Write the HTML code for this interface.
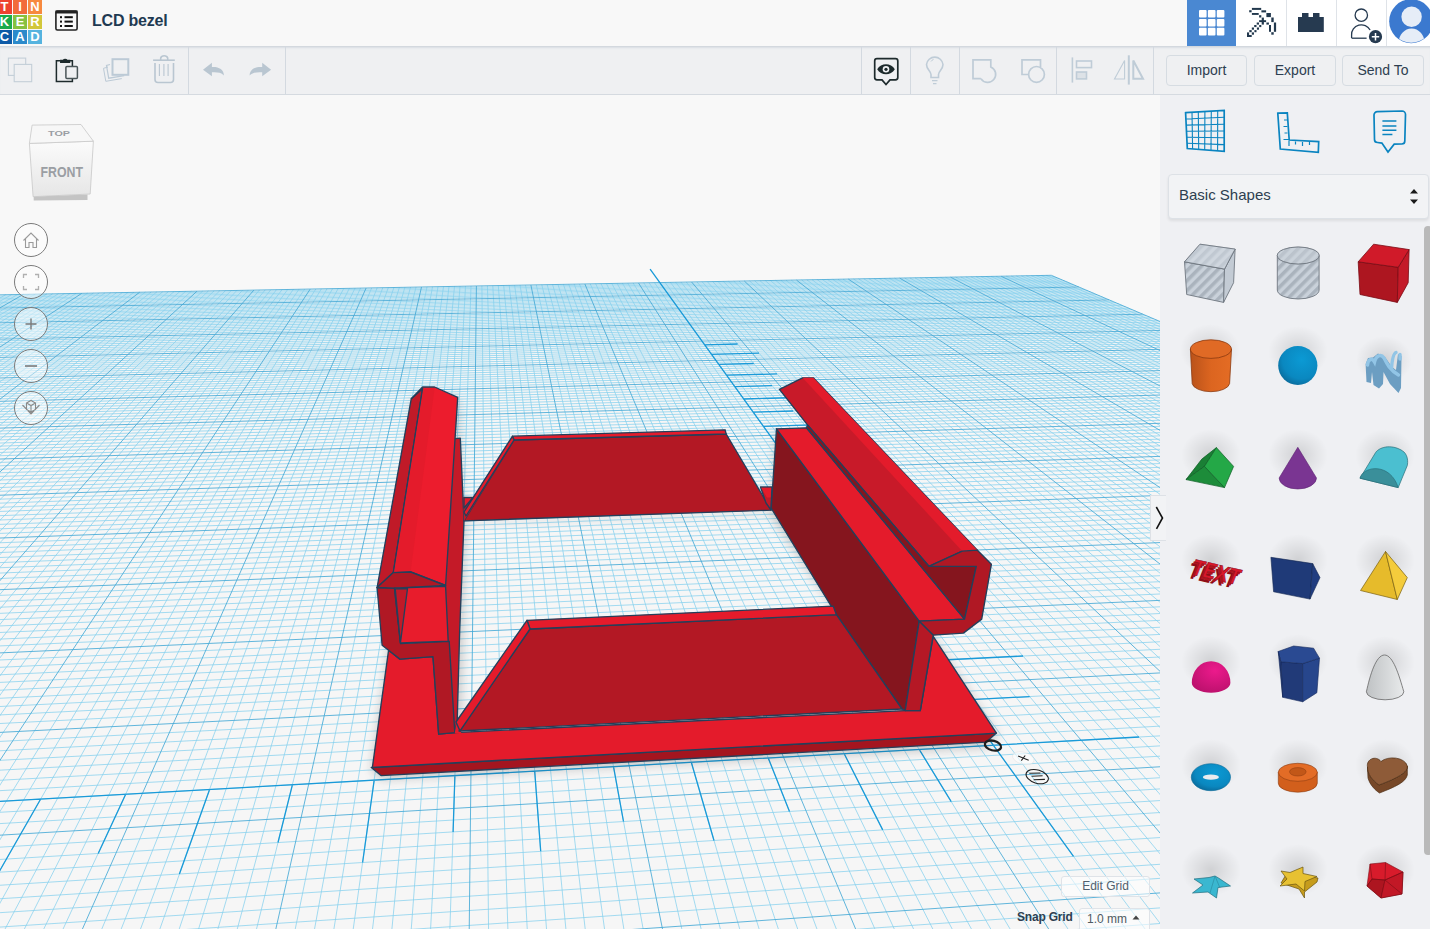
<!DOCTYPE html>
<html><head><meta charset="utf-8"><title>LCD bezel | Tinkercad</title>
<style>
*{box-sizing:border-box}
html,body{margin:0;padding:0;width:1430px;height:929px;overflow:hidden;background:#f8f8f8;font-family:"Liberation Sans",sans-serif}
.abs{position:absolute}
#view{position:absolute;left:0;top:95px;width:1160px;height:834px;overflow:hidden;background:#f8f8f8}
#header{position:absolute;left:0;top:0;width:1430px;height:47px;background:#f8f8f8;border-bottom:1px solid #d3d8de}
#hright{position:absolute;left:1236px;top:0;width:194px;height:46px;background:#fff}
#toolbar{position:absolute;left:0;top:47px;width:1430px;height:48px;background:#eff0f2;border-bottom:1px solid #d5dae0;box-shadow:inset 0 2px 2px -1px #d8dde3}
#panel{position:absolute;left:1160px;top:95px;width:270px;height:834px;background:#eff0f3;overflow:hidden}
.sep{position:absolute;width:1px;background:#d3d9e0}
.title{position:absolute;left:92px;top:12px;font-size:16px;font-weight:bold;color:#1f3a52;letter-spacing:-0.2px}
.btn{position:absolute;top:8px;height:31px;border:1px solid #d6dce2;border-radius:4px;font-size:14px;color:#2d3e50;text-align:center;line-height:29px;background:#eff0f2}
.logo div{position:absolute;width:14px;height:14px;color:#fff;font-weight:bold;font-size:13px;line-height:14px;text-align:center}
.ctl{position:absolute;left:14px;width:34px;height:34px;border-radius:50%;border:1px solid #7b7b7b;background:rgba(255,255,255,0.45)}
</style></head><body>
<div id="view">
<svg width="1160" height="834" viewBox="0 95 1160 834" style="position:absolute;left:0;top:0">
<polygon points="-35.4,295.5 1051.3,275.3 2468.9,877.7 -1812.3,1204.1" fill="#f6f6f6"/>
<path d="M-29.5 295.4L-1782.5 1201.8M-23.6 295.3L-1752.9 1199.6M-17.7 295.1L-1723.4 1197.3M-11.8 295.0L-1694.0 1195.1M-5.9 294.9L-1664.7 1192.9M-0.0 294.8L-1635.5 1190.6M5.8 294.7L-1606.4 1188.4M11.7 294.6L-1577.4 1186.2M17.6 294.5L-1548.6 1184.0M29.3 294.3L-1491.2 1179.6M35.2 294.2L-1462.7 1177.5M41.0 294.1L-1434.3 1175.3M46.9 293.9L-1406.0 1173.1M52.7 293.8L-1377.8 1171.0M58.5 293.7L-1349.7 1168.8M64.4 293.6L-1321.8 1166.7M70.2 293.5L-1293.9 1164.6M76.0 293.4L-1266.1 1162.5M87.6 293.2L-1210.9 1158.3M93.4 293.1L-1183.5 1156.2M99.2 293.0L-1156.1 1154.1M105.0 292.9L-1128.9 1152.0M110.8 292.8L-1101.7 1149.9M116.6 292.7L-1074.7 1147.9M122.4 292.5L-1047.8 1145.8M128.1 292.4L-1020.9 1143.8M133.9 292.3L-994.2 1141.7M145.4 292.1L-941.0 1137.7M151.2 292.0L-914.5 1135.7M156.9 291.9L-888.2 1133.7M162.7 291.8L-861.9 1131.7M168.4 291.7L-835.8 1129.7M174.1 291.6L-809.7 1127.7M179.9 291.5L-783.8 1125.7M185.6 291.4L-757.9 1123.7M191.3 291.3L-732.1 1121.8M202.7 291.1L-680.9 1117.9M208.4 291.0L-655.4 1115.9M214.1 290.8L-630.0 1114.0M219.8 290.7L-604.7 1112.0M225.5 290.6L-579.5 1110.1M231.2 290.5L-554.3 1108.2M236.9 290.4L-529.3 1106.3M242.5 290.3L-504.4 1104.4M248.2 290.2L-479.5 1102.5M259.5 290.0L-430.1 1098.7M265.2 289.9L-405.5 1096.9M270.8 289.8L-381.0 1095.0M276.5 289.7L-356.5 1093.1M282.1 289.6L-332.2 1091.3M287.7 289.5L-308.0 1089.4M293.4 289.4L-283.8 1087.6M299.0 289.3L-259.7 1085.7M304.6 289.2L-235.8 1083.9M315.8 289.0L-188.0 1080.3M321.4 288.9L-164.3 1078.5M327.0 288.8L-140.7 1076.7M332.6 288.7L-117.1 1074.9M338.2 288.5L-93.6 1073.1M343.8 288.4L-70.2 1071.3M349.4 288.3L-46.9 1069.5M355.0 288.2L-23.6 1067.7M360.5 288.1L-0.5 1066.0M371.7 287.9L45.6 1062.5M377.2 287.8L68.6 1060.7M382.8 287.7L91.4 1059.0M388.3 287.6L114.2 1057.2M393.9 287.5L136.9 1055.5M399.4 287.4L159.5 1053.8M404.9 287.3L182.0 1052.1M410.5 287.2L204.5 1050.4M416.0 287.1L226.8 1048.6M427.0 286.9L271.4 1045.3M432.5 286.8L293.5 1043.6M438.0 286.7L315.6 1041.9M443.5 286.6L337.6 1040.2M449.0 286.5L359.5 1038.5M454.5 286.4L381.4 1036.9M460.0 286.3L403.2 1035.2M465.5 286.2L424.9 1033.5M471.0 286.1L446.5 1031.9M481.9 285.9L489.6 1028.6M487.4 285.8L511.0 1027.0M492.8 285.7L532.4 1025.4M498.3 285.6L553.6 1023.7M503.7 285.5L574.9 1022.1M509.2 285.4L596.0 1020.5M514.6 285.3L617.1 1018.9M520.1 285.2L638.1 1017.3M525.5 285.1L659.0 1015.7M536.3 284.9L700.7 1012.5M541.8 284.8L721.4 1010.9M547.2 284.7L742.0 1009.4M552.6 284.6L762.6 1007.8M558.0 284.5L783.2 1006.2M563.4 284.4L803.6 1004.7M568.8 284.3L824.0 1003.1M574.2 284.2L844.3 1001.6M579.5 284.1L864.6 1000.0M590.3 283.9L904.9 997.0M595.7 283.8L925.0 995.4M601.0 283.7L945.0 993.9M606.4 283.6L964.9 992.4M611.8 283.5L984.8 990.9M617.1 283.4L1004.6 989.4M622.5 283.3L1024.3 987.8M627.8 283.2L1044.0 986.3M633.2 283.1L1063.6 984.9M643.8 282.9L1102.7 981.9M649.1 282.8L1122.1 980.4M654.5 282.7L1141.5 978.9M659.8 282.6L1160.8 977.4M665.1 282.5L1180.0 976.0M670.4 282.4L1199.2 974.5M675.7 282.3L1218.3 973.1M681.0 282.2L1237.4 971.6M686.3 282.1L1256.4 970.2M696.9 281.9L1294.3 967.3M702.2 281.8L1313.1 965.8M707.4 281.7L1331.9 964.4M712.7 281.6L1350.6 963.0M718.0 281.5L1369.2 961.6M723.3 281.4L1387.8 960.1M728.5 281.3L1406.4 958.7M733.8 281.2L1424.8 957.3M739.0 281.1L1443.3 955.9M749.5 280.9L1479.9 953.1M754.7 280.8L1498.2 951.7M760.0 280.7L1516.4 950.3M765.2 280.6L1534.5 948.9M770.4 280.5L1552.6 947.6M775.7 280.4L1570.7 946.2M780.9 280.3L1588.6 944.8M786.1 280.3L1606.6 943.5M791.3 280.2L1624.4 942.1M801.7 280.0L1660.0 939.4M806.9 279.9L1677.7 938.0M812.1 279.8L1695.4 936.7M817.3 279.7L1713.0 935.3M822.5 279.6L1730.5 934.0M827.6 279.5L1748.0 932.7M832.8 279.4L1765.4 931.3M838.0 279.3L1782.8 930.0M843.1 279.2L1800.2 928.7M853.5 279.0L1834.7 926.1M858.6 278.9L1851.9 924.8M863.8 278.8L1869.0 923.4M868.9 278.7L1886.1 922.1M874.0 278.6L1903.1 920.8M879.2 278.5L1920.1 919.6M884.3 278.4L1937.0 918.3M889.4 278.3L1953.9 917.0M894.6 278.2L1970.7 915.7M904.8 278.1L2004.2 913.1M909.9 278.0L2020.9 911.9M915.0 277.9L2037.5 910.6M920.1 277.8L2054.1 909.3M925.2 277.7L2070.7 908.1M930.3 277.6L2087.1 906.8M935.4 277.5L2103.6 905.6M940.5 277.4L2120.0 904.3M945.6 277.3L2136.3 903.1M955.7 277.1L2168.9 900.6M960.8 277.0L2185.1 899.4M965.8 276.9L2201.2 898.1M970.9 276.8L2217.3 896.9M976.0 276.7L2233.4 895.7M981.0 276.6L2249.4 894.4M986.1 276.5L2265.4 893.2M991.1 276.5L2281.3 892.0M996.1 276.4L2297.2 890.8M1006.2 276.2L2328.8 888.4M1011.2 276.1L2344.5 887.2M1016.3 276.0L2360.2 886.0M1021.3 275.9L2375.9 884.8M1026.3 275.8L2391.5 883.6M1031.3 275.7L2407.0 882.4M1036.3 275.6L2422.6 881.2M1041.3 275.5L2438.0 880.1M1046.3 275.4L2453.5 878.9M-1853.2 1225.0L2494.2 888.5M-1801.6 1198.6L2462.2 874.9M-1752.2 1173.4L2431.1 861.7M-1704.9 1149.2L2401.0 848.9M-1659.5 1126.0L2371.8 836.5M-1616.0 1103.7L2343.5 824.4M-1534.1 1061.9L2289.3 801.4M-1495.6 1042.1L2263.4 790.4M-1458.4 1023.1L2238.2 779.7M-1422.6 1004.8L2213.8 769.3M-1388.2 987.2L2190.0 759.2M-1354.9 970.2L2166.8 749.4M-1322.8 953.8L2144.2 739.8M-1291.9 938.0L2122.3 730.4M-1261.9 922.7L2100.9 721.4M-1205.0 893.6L2059.8 703.9M-1177.9 879.7L2040.0 695.5M-1151.7 866.3L2020.7 687.3M-1126.3 853.3L2001.8 679.3M-1101.6 840.7L1983.5 671.5M-1077.7 828.5L1965.5 663.8M-1054.6 816.6L1948.0 656.4M-1032.1 805.1L1930.9 649.1M-1010.2 793.9L1914.2 642.0M-968.4 772.5L1881.9 628.3M-948.3 762.3L1866.3 621.7M-928.8 752.3L1851.0 615.2M-909.8 742.6L1836.1 608.8M-891.3 733.1L1821.5 602.6M-873.3 723.9L1807.1 596.5M-855.8 715.0L1793.1 590.6M-838.7 706.2L1779.4 584.8M-822.1 697.7L1766.0 579.0M-790.0 681.3L1740.0 568.0M-774.6 673.4L1727.4 562.6M-759.5 665.7L1715.0 557.4M-744.8 658.2L1702.8 552.2M-730.4 650.9L1690.9 547.1M-716.4 643.7L1679.3 542.2M-702.6 636.7L1667.8 537.3M-689.2 629.8L1656.6 532.6M-676.1 623.1L1645.6 527.9M-650.8 610.1L1624.2 518.8M-638.5 603.9L1613.7 514.3M-626.5 597.7L1603.5 510.0M-614.8 591.7L1593.4 505.7M-603.3 585.9L1583.6 501.5M-592.0 580.1L1573.9 497.4M-581.0 574.5L1564.3 493.3M-570.2 568.9L1555.0 489.4M-559.6 563.5L1545.8 485.5M-539.1 553.0L1527.8 477.8M-529.1 547.9L1519.1 474.1M-519.3 542.9L1510.5 470.5M-509.8 538.0L1502.0 466.9M-500.4 533.2L1493.7 463.3M-491.1 528.5L1485.5 459.8M-482.1 523.9L1477.4 456.4M-473.2 519.3L1469.5 453.0M-464.5 514.9L1461.7 449.7M-447.5 506.2L1446.4 443.2M-439.2 502.0L1439.0 440.1M-431.1 497.8L1431.7 437.0M-423.1 493.7L1424.4 433.9M-415.3 489.7L1417.3 430.9M-407.6 485.8L1410.3 427.9M-400.0 481.9L1403.4 425.0M-392.6 478.1L1396.6 422.1M-385.3 474.4L1389.9 419.2M-371.0 467.1L1376.8 413.6M-364.0 463.5L1370.4 410.9M-357.2 460.0L1364.0 408.2M-350.5 456.6L1357.8 405.6M-343.8 453.2L1351.7 403.0M-337.3 449.8L1345.6 400.4M-330.9 446.6L1339.6 397.8M-324.6 443.3L1333.7 395.3M-318.3 440.1L1327.9 392.9M-306.2 433.9L1316.5 388.0M-300.2 430.9L1310.9 385.7M-294.4 427.9L1305.4 383.3M-288.6 424.9L1299.9 381.0M-282.9 422.0L1294.6 378.7M-277.3 419.2L1289.3 376.5M-271.8 416.4L1284.0 374.2M-266.4 413.6L1278.9 372.0M-261.0 410.8L1273.8 369.9M-250.5 405.5L1263.8 365.6M-245.4 402.8L1258.9 363.5M-240.3 400.3L1254.0 361.5M-235.4 397.7L1249.2 359.4M-230.4 395.2L1244.5 357.4M-225.6 392.7L1239.8 355.5M-220.8 390.3L1235.2 353.5M-216.1 387.8L1230.7 351.6M-211.4 385.5L1226.2 349.6M-202.3 380.8L1217.3 345.9M-197.8 378.5L1213.0 344.0M-193.4 376.2L1208.7 342.2M-189.0 374.0L1204.4 340.4M-184.7 371.8L1200.2 338.6M-180.4 369.6L1196.1 336.9M-176.2 367.5L1192.0 335.1M-172.1 365.4L1187.9 333.4M-168.0 363.3L1183.9 331.7M-160.0 359.2L1176.1 328.3M-156.0 357.1L1172.2 326.7M-152.1 355.2L1168.3 325.1M-148.3 353.2L1164.6 323.5M-144.5 351.2L1160.8 321.9M-140.7 349.3L1157.1 320.3M-137.0 347.4L1153.4 318.7M-133.4 345.6L1149.8 317.2M-129.7 343.7L1146.2 315.7M-122.6 340.1L1139.2 312.7M-119.1 338.3L1135.7 311.2M-115.7 336.5L1132.2 309.7M-112.3 334.8L1128.8 308.3M-108.9 333.0L1125.5 306.9M-105.5 331.3L1122.1 305.4M-102.2 329.6L1118.8 304.0M-99.0 328.0L1115.6 302.6M-95.8 326.3L1112.3 301.3M-89.4 323.1L1106.0 298.6M-86.3 321.5L1102.8 297.2M-83.2 319.9L1099.7 295.9M-80.1 318.3L1096.7 294.6M-77.1 316.8L1093.6 293.3M-74.1 315.3L1090.6 292.0M-71.2 313.8L1087.6 290.8M-68.2 312.3L1084.7 289.5M-65.4 310.8L1081.7 288.3M-59.7 307.9L1076.0 285.8M-56.9 306.4L1073.1 284.6M-54.1 305.0L1070.3 283.4M-51.3 303.6L1067.5 282.2M-48.6 302.2L1064.8 281.1M-45.9 300.8L1062.0 279.9M-43.3 299.5L1059.3 278.7M-40.6 298.1L1056.6 277.6M-38.0 296.8L1054.0 276.5" stroke="#86d0ee" stroke-width="0.75" fill="none"/>
<path d="M-35.4 295.5L-1812.3 1204.1M23.4 294.4L-1519.9 1181.8M81.8 293.3L-1238.5 1160.4M139.7 292.2L-967.5 1139.7M197.0 291.2L-706.5 1119.8M253.9 290.1L-454.7 1100.6M310.2 289.1L-211.9 1082.1M366.1 288.0L22.6 1064.2M421.5 287.0L249.1 1046.9M476.4 286.0L468.1 1030.3M530.9 285.0L679.9 1014.1M584.9 284.0L884.8 998.5M638.5 283.0L1083.2 983.4M691.6 282.0L1275.4 968.7M744.3 281.0L1461.6 954.5M796.5 280.1L1642.2 940.7M848.3 279.1L1817.5 927.4M899.7 278.1L1987.5 914.4M950.6 277.2L2152.6 901.8M1001.2 276.3L2313.0 889.6M1051.3 275.3L2468.9 877.7M-1574.3 1082.4L2316.0 812.8M-1233.0 907.9L2080.1 712.5M-989.0 783.1L1897.8 635.1M-805.8 689.4L1752.9 573.5M-663.3 616.6L1634.8 523.3M-549.3 558.2L1536.7 481.6M-455.9 510.5L1454.0 446.5M-378.1 470.7L1383.3 416.4M-312.2 437.0L1322.2 390.4M-255.7 408.1L1268.8 367.7M-206.8 383.1L1221.7 347.8M-164.0 361.2L1180.0 330.0M-126.2 341.9L1142.7 314.2M-92.6 324.7L1109.1 299.9M-62.5 309.3L1078.8 287.0M-35.4 295.5L1051.3 275.3" stroke="#45a9d6" stroke-width="0.85" fill="none"/>
<path d="M-756.7 844.0L1139.0 737.0M1073.5 856.4L650.1 269.1M919.2 749.4L951.2 801.6M960.9 700.2L1029.7 696.6M844.2 753.7L882.7 829.9M932.3 660.5L1023.0 656.0M768.2 757.9L789.5 811.5M906.8 625.2L968.3 622.4M691.3 762.3L714.0 840.5M884.1 593.7L965.6 590.2M613.5 766.7L623.5 821.5M863.7 565.4L919.2 563.1M534.7 771.1L540.7 851.3M845.3 539.8L919.2 536.9M454.9 775.6L453.1 831.9M828.5 516.6L879.0 514.7M374.2 780.2L362.6 862.5M813.2 495.4L880.8 492.9M292.4 784.8L278.0 842.5M799.2 475.9L845.6 474.3M209.6 789.5L179.4 874.0M786.3 458.0L848.6 456.0M125.7 794.2L98.2 853.5M774.4 441.6L817.3 440.2M40.7 799.0L-8.9 885.8M763.4 426.3L821.2 424.6M-45.3 803.9L-86.7 864.7M753.2 412.1L793.1 411.0M-132.5 808.8L-202.8 898.0M743.7 399.0L797.6 397.5M-220.8 813.8L-276.8 876.3M734.8 386.7L772.1 385.7M-310.3 818.8L-402.3 910.5M726.5 375.2L777.0 373.9M-401.0 823.9L-472.4 888.2M718.8 364.4L753.8 363.5M-492.8 829.1L-607.8 923.4M711.5 354.3L759.0 353.1M-586.0 834.4L-673.7 900.4M704.6 344.8L737.6 344.0" stroke="#1a9ad8" stroke-width="1.3" fill="none"/>
<defs><filter id="blr" x="-20%" y="-20%" width="140%" height="140%"><feGaussianBlur stdDeviation="5"/></filter></defs>
<g filter="url(#blr)" opacity="0.22" fill="#333">
<path fill-rule="evenodd" d="M371 770 L388 650 L400 590 L412 400 L458 398 L464 522 L771 510 L776 430 L933 636 L998 735 L986 748 L381 780Z M466 524 L769 513 L900 707 L461 728Z"/>
</g>
<g stroke="#243f5a" stroke-width="1.35" stroke-linejoin="round">
<polygon fill="#a4151f" points="371.3,767.5 984.5,733.8 996.4,733.1 986,742.2 381,775.6"/>
<polygon fill="#e41b2b" points="372.4,767.3 388.6,650.2 399.9,659.1 433,656.7 438.7,734.2 454.8,732.6 905.2,710.6 920.3,710.6 933.2,636.3 996.4,733.1 984.5,733.8"/>
<polygon fill="#c41a28" points="455,438.7 460.3,438.1 464,521 459.7,630 457.2,720.5 454.8,732.6 440,732 440,440"/>
<polygon fill="#b01824" points="377.1,587.5 394.5,588.1 400.7,643.7 449.2,641.3 454.8,732.6 438.7,734.2 433,656.7 399.9,659.1 388.6,650.2 382.1,645.3"/>
<polygon fill="#b31824" points="514,440 726.2,434 771.2,510.2 464,520.8"/>
<polygon fill="#e51b2b" points="512.5,436.2 725.1,429.8 726.2,434 514,440"/>
<polygon fill="#c41a28" stroke="none" points="463,497 473,497 512.5,436.2 514,440 464,521"/>
<polygon fill="#e51b2b" points="512.5,436.2 514,440 466,516 464,512"/>
<polygon fill="#e51b2b" points="464,497.5 473,497.5 464,508"/>
<polygon fill="#c21a28" points="760.5,487 772,487 771,510 766,503"/>
<polygon fill="#e51b2b" stroke="none" points="761.2,487.8 771.2,487.8 770.6,497.5 767,497.5"/>
<polygon fill="#85151e" points="776.5,428.8 919.2,621.2 905.2,710.6 902,709 836.4,614.7 771.2,508.2"/>
<polygon fill="#e41b2b" points="776.5,428.8 806.5,427.8 964.5,619.1 919.2,621.2"/>
<polygon fill="#c81a29" points="779.4,389.4 802.6,377.8 813.3,377.8 977.4,550.2 962.3,551.2 928.9,566.3 807.5,424.9"/>
<polygon fill="#e31b2b" stroke="none" points="802.6,377.8 813.3,377.8 977.4,550.2 962.3,551.2"/>
<polygon fill="#85151e" points="806.5,427.8 807.5,424.9 928.9,566.3 976.3,566.3 964.5,619.1"/>
<polygon fill="#b01824" points="928.9,566.3 962.3,551.2 977.4,550.2 991.4,564.2 981.7,619.1 963.4,633.1 933.2,635.2 919.2,621.2 964.5,619.1 976.3,566.3"/>
<polygon fill="#b51825" points="919.2,621.2 933.2,635.2 920.3,710.6 905.2,710.6"/>
<polygon fill="#e51b2b" stroke="none" points="454.8,733 457.2,719.5 463,721 461,733"/>
<polygon fill="#b31824" points="530,629 836.4,614.7 902,709 459,731"/>
<polygon fill="#e51b2b" points="527,620.3 833.2,606.1 836.4,614.7 530,629"/>
<polygon fill="#e51b2b" points="527,620.3 530,629 460,731 456,722"/>
<polygon fill="#c01a28" points="411.3,398.7 422.6,388.5 393.3,572.6 377.1,587.5"/>
<polygon fill="#ec1c2d" points="411.3,398.7 422.6,387 434.6,387 457.7,397.4 445.6,585.5 410.7,572 393.3,572.6 422.6,388.5"/>
<polygon fill="#e41b2b" stroke="none" points="423.5,389.5 434.6,388 410.7,571 394.5,571.5"/>
<polygon fill="#b01824" points="377.1,587.5 393.3,572.6 410.7,572 445.6,585.5 394.5,588.1"/>
<polygon fill="#e81c2c" points="394.5,588.1 445.6,586.4 448.2,641.1 400.4,643"/>
<polygon fill="#c01a28" points="395.2,588.8 407.5,588.5 400.4,643"/>
</g>
<ellipse cx="0" cy="0" rx="8.3" ry="4.8" fill="none" stroke="#1e1e1e" stroke-width="2.3" transform="translate(993 745.6) rotate(14)"/>
<ellipse cx="0" cy="0" rx="11" ry="6" fill="rgba(255,255,255,0.6)" stroke="rgba(220,220,220,0.7)" stroke-width="0.6" transform="translate(1023.3 758.2) rotate(15)"/>
<path d="M1018.1 756.1 L1028.7 760.3 M1021.3 760.7 L1025.2 755.5" stroke="#222" stroke-width="1.1"/>
<ellipse cx="0" cy="0" rx="11.5" ry="6.6" fill="none" stroke="#1e1e1e" stroke-width="1.1" transform="translate(1037.2 776.6) rotate(17)"/>
<path d="M1029.4 773.3 L1040.4 773 M1031.6 776.2 L1042.6 775.8 M1033.6 779.7 L1044.9 779.4" stroke="#222" stroke-width="1.1"/>

</svg>
<!-- view cube -->
<svg class="abs" style="left:0;top:0" width="120" height="120" viewBox="0 95 120 120">
<defs><linearGradient id="cf" x1="0" y1="0" x2="0" y2="1"><stop offset="0" stop-color="#fbfbfb"/><stop offset="1" stop-color="#e6e6e6"/></linearGradient></defs>
<polygon points="33.7,196.5 87.5,194.5 87.5,199.9 33.7,200.5" fill="#c4c4c4"/>
<polygon points="29.4,143.4 93.4,141.2 90.2,194 33.1,196.7" fill="url(#cf)" stroke="#c8c8c8" stroke-width="0.8"/>
<polygon points="32.1,125.1 81,124.5 93.4,141.2 29.4,143.4" fill="#f7f7f7" stroke="#c8c8c8" stroke-width="0.8"/>
<text x="40.5" y="176.5" font-size="14.5" font-weight="bold" fill="#9a9ea3" textLength="42.5" lengthAdjust="spacingAndGlyphs">FRONT</text>
<text x="48" y="135.5" font-size="6.5" font-weight="bold" fill="#9a9ea3" textLength="22" lengthAdjust="spacingAndGlyphs">TOP</text>
</svg>
<div class="ctl" style="top:128px"></div>
<div class="ctl" style="top:170px"></div>
<div class="ctl" style="top:212px"></div>
<div class="ctl" style="top:254px"></div>
<div class="ctl" style="top:296px"></div>
<svg class="abs" style="left:0;top:0" width="60" height="330" viewBox="0 95 60 330" fill="none" stroke="#8a8a8a" stroke-width="1.1">
<path d="M23.5 240.5 L31 233 L38.5 240.5 M25.5 239 V247.5 H29 V242.5 H33 V247.5 H36.5 V239" stroke="#9a9a9a"/>
<path d="M23.5 278 V274.5 H27 M35 274.5 H38.5 V278 M38.5 286 V289.5 H35 M27 289.5 H23.5 V286" stroke="#b0b0b0" stroke-width="1.3"/>
<path d="M25.5 324 H36.5 M31 318.5 V329.5" stroke="#7a7a7a" stroke-width="1.4"/>
<path d="M25 366 H37" stroke="#7a7a7a" stroke-width="1.6"/>
<path d="M26.5 403 L31 400.5 L35.5 403 V409.5 L31 412 L26.5 409.5 Z M26.5 403 L31 405.5 L35.5 403 M31 405.5 V412 M22.5 405 L31 414 L39.5 405" stroke="#8a8a8a"/>
</svg>
<!-- edit grid -->
<div class="abs" style="left:1061px;top:781px;width:89px;height:21px;border:1px solid #dfe3e8;border-radius:3px;background:rgba(255,255,255,0.55);font-size:12px;color:#4f5f6e;text-align:center;line-height:19px">Edit Grid</div>
<div class="abs" style="left:1017px;top:815px;font-size:12px;color:#2d3e50;font-weight:bold;letter-spacing:-0.2px">Snap Grid</div>
<div class="abs" style="left:1079px;top:813px;width:71px;height:24px;border:1px solid #dfe3e8;border-radius:3px;background:rgba(255,255,255,0.6);font-size:12px;color:#4f5a62;padding-left:7px;line-height:20px">1.0 mm</div>
<svg class="abs" style="left:1130px;top:818px" width="12" height="10"><path d="M2.5 6.5 L6 2.5 L9.5 6.5 Z" fill="#444"/></svg>
</div>

<div id="header">
<div class="logo">
<div style="left:-2.5px;top:0;background:#ee4130">T</div>
<div style="left:13px;top:0;background:#f26b3a">I</div>
<div style="left:28px;top:0;background:#f7893f">N</div>
<div style="left:-2.5px;top:15px;background:#1aab4b">K</div>
<div style="left:13px;top:15px;background:#86c13f">E</div>
<div style="left:28px;top:15px;background:#d2c73a">R</div>
<div style="left:-2.5px;top:30px;background:#0d5aa7">C</div>
<div style="left:13px;top:30px;background:#2b8acb">A</div>
<div style="left:28px;top:30px;background:#55b3df">D</div>
</div>
<svg class="abs" style="left:50px;top:5px" width="32" height="32" viewBox="50 5 32 32">
<rect x="55.9" y="11" width="21.2" height="19" rx="1.5" fill="none" stroke="#222" stroke-width="1.6"/>
<rect x="55.5" y="10.5" width="22" height="3" fill="#222"/>
<rect x="60" y="16.2" width="2" height="2" fill="#111"/><rect x="60" y="20.6" width="2" height="2" fill="#111"/><rect x="60" y="25" width="2" height="2" fill="#111"/>
<rect x="64.5" y="16.2" width="8.3" height="2" fill="#111"/><rect x="64.5" y="20.6" width="8.3" height="2" fill="#111"/><rect x="64.5" y="25" width="8.3" height="2" fill="#111"/>
</svg>
<div class="title">LCD bezel</div>
<div id="hright"></div>
<div class="abs" style="left:1187px;top:0;width:49px;height:46px;background:#4a88d2"></div>
<svg class="abs" style="left:1187px;top:0" width="49" height="46" viewBox="1187 0 49 46" fill="#fff">
<rect x="1199" y="10" width="7.6" height="7.6" rx="1"/><rect x="1207.9" y="10" width="7.6" height="7.6" rx="1"/><rect x="1216.8" y="10" width="7.6" height="7.6" rx="1"/>
<rect x="1199" y="18.9" width="7.6" height="7.6" rx="1"/><rect x="1207.9" y="18.9" width="7.6" height="7.6" rx="1"/><rect x="1216.8" y="18.9" width="7.6" height="7.6" rx="1"/>
<rect x="1199" y="27.8" width="7.6" height="7.6" rx="1"/><rect x="1207.9" y="27.8" width="7.6" height="7.6" rx="1"/><rect x="1216.8" y="27.8" width="7.6" height="7.6" rx="1"/>
</svg>
<svg class="abs" style="left:1236px;top:0" width="194" height="46" viewBox="1236 0 194 46">
<g fill="#22384d"><rect x="1251.9" y="7.9" width="9.3" height="2.0"/><rect x="1249.2" y="10.2" width="2.4" height="2.1"/><rect x="1251.9" y="13.0" width="6.8" height="1.9"/><rect x="1261.4" y="10.3" width="4.7" height="2.1"/><rect x="1266.4" y="13.0" width="4.5" height="4.1"/><rect x="1271.3" y="17.5" width="2.4" height="4.6"/><rect x="1273.9" y="22.5" width="2.2" height="9.3"/><rect x="1269" y="25" width="2.0" height="6.8"/><rect x="1271.3" y="32.2" width="2.4" height="2.5"/><rect x="1259.1" y="15.2" width="2.2" height="2.3"/><rect x="1259.1" y="20.2" width="7.0" height="1.9"/><rect x="1261.7" y="17.6" width="2.2" height="7.0"/><rect x="1266.4" y="22.5" width="2.5" height="2.1"/><rect x="1256.7" y="22.5" width="2.3" height="2.1"/><rect x="1259.2" y="25" width="2.1" height="2.1"/><rect x="1254.2" y="25" width="2.3" height="2.1"/><rect x="1251.8" y="27.5" width="2.2" height="2.2"/><rect x="1256.9" y="27.5" width="2.1" height="2.2"/><rect x="1249.3" y="30.1" width="2.4" height="2.1"/><rect x="1254.4" y="30.1" width="2.1" height="2.1"/><rect x="1251.8" y="32.4" width="2.2" height="2.3"/><rect x="1247" y="32.4" width="2.1" height="4.6"/><rect x="1247" y="35" width="4.7" height="2.0"/></g>
<path d="M1298 17 h4 v-4 h6.5 v4 h4.5 v-4 h6.5 v4 h4.3 v15 h-25.8z" fill="#263a50"/>
<circle cx="1361.3" cy="15.2" r="6.2" fill="none" stroke="#263a50" stroke-width="1.3"/>
<path d="M1351.6 38 v-3 a9.8 9.5 0 0 1 18.5 -5" fill="none" stroke="#263a50" stroke-width="1.3"/>
<path d="M1351.6 38.2 h15" stroke="#263a50" stroke-width="1.3"/>
<circle cx="1375.5" cy="36.7" r="6.6" fill="#263a50"/>
<path d="M1375.5 33 v7.4 M1371.8 36.7 h7.4" stroke="#fff" stroke-width="1.5"/>
<circle cx="1411.2" cy="21.2" r="22" fill="#3b79cf"/>
<clipPath id="av"><circle cx="1411.2" cy="21.2" r="21.5"/></clipPath>
<g clip-path="url(#av)" fill="#e6edf7"><circle cx="1411.6" cy="16.8" r="10.2"/><ellipse cx="1411.6" cy="43" rx="13" ry="14.5"/></g>
</svg>
<div class="sep" style="left:1286px;top:0;height:46px;background:#dfe3e8"></div>
<div class="sep" style="left:1336px;top:0;height:46px;background:#dfe3e8"></div>
<div class="sep" style="left:1386px;top:0;height:46px;background:#dfe3e8"></div>
</div>

<div id="toolbar">
<div class="sep" style="left:188px;top:0;height:47px"></div>
<div class="sep" style="left:285px;top:0;height:47px"></div>
<div class="sep" style="left:861px;top:0;height:47px"></div>
<div class="sep" style="left:910px;top:0;height:47px"></div>
<div class="sep" style="left:959px;top:0;height:47px"></div>
<div class="sep" style="left:1056px;top:0;height:47px"></div>
<div class="sep" style="left:1153px;top:0;height:47px"></div>
<svg class="abs" style="left:0;top:0" width="1160" height="47" viewBox="0 47 1160 47" fill="none">
<g stroke="#c3ced8" stroke-width="1.1"><rect x="8.4" y="58.1" width="17.3" height="17.3"/><rect x="14.2" y="64.4" width="17.5" height="17.3" fill="#eff0f2"/></g>
<g stroke="#1d2a2c" stroke-width="1.5"><path d="M60.3 60.8 H56.4 V81.4 H72.4 V78.4 M72.4 66.4 V60.8 H69.5"/><rect x="65.9" y="66.5" width="11.5" height="11.9" rx="1" stroke="#4a5558"/><path d="M60.8 62.3 h8.7 v-1.8 h-2.5 a2.2 2.2 0 0 0 -3.7 0 h-2.5z" fill="#1d2a2c"/></g>
<g stroke="#bccad6"><rect x="112.5" y="59.2" width="15.8" height="15.6" stroke-width="2"/><path d="M110 64.5 l-3.5 1 l2.2 12.7 l15.5 -2.5" stroke-width="1.2"/><path d="M108 67 l-4.5 1.3 l2.3 13 l16 -2.7" stroke-width="1"/></g>
<g stroke="#b9c6d1" stroke-width="1.6"><path d="M153.1 60.2 H174.8"/><path d="M160.7 60 v-2 a3.6 3 0 0 1 7 0 v2"/><path d="M155 63 V79.5 a3 3 0 0 0 3 3 H170.5 a3 3 0 0 0 3 -3 V63"/><path d="M159.4 64 V76 M163.9 64 V76 M168.1 64 V76" stroke-width="1.1"/></g>
<g fill="#b9c6d1"><path d="M203 69.7 L211.9 62.8 V67 C218 66.5 224 69 223.9 75.4 C221 72 216 72 211.9 72.2 V76.3z"/><path d="M271.1 69.7 L262.2 62.8 V67 C256 66.5 250 69 249.6 75.4 C253 72 258 72 262.2 72.2 V76.3z"/></g>
<g stroke="#1d2a2c" stroke-width="1.7"><path d="M877 58.6 H895.5 a2.3 2.3 0 0 1 2.3 2.3 V77.6 a2.3 2.3 0 0 1 -2.3 2.3 H890 L886 84.5 L882 79.9 H877 a2.3 2.3 0 0 1 -2.3 -2.3 V60.9 a2.3 2.3 0 0 1 2.3 -2.3z"/></g>
<path d="M877.2 69.3 C881 62.5 891 62.5 894.8 69.3 C891 76 881 76 877.2 69.3z" fill="#1d2a2c"/><circle cx="886" cy="69.3" r="3.3" fill="#eff0f2"/><circle cx="886" cy="69.3" r="1.6" fill="#1d2a2c"/>
<g stroke="#bfccd7" stroke-width="1.6"><path d="M931 77.5 V74.5 C931 71 926.5 69.5 926.5 64.5 A8.3 8.3 0 0 1 943 64.5 C943 69.5 938.5 71 938.5 74.5 V77.5z"/><path d="M932 80.7 h5.5 M933 83.6 h3.5" stroke-width="1.3"/><path d="M931 61.5 a4 4 0 0 1 2.5 -2" stroke-width="1"/></g>
<g stroke="#bfccd7" stroke-width="1.7"><path d="M980.9 78.6 H973 V59.8 H990.8 V67 A8 8 0 1 1 980.9 78.6"/></g>
<g stroke="#bfccd7" stroke-width="1.7"><path d="M1029 74.5 H1022 V59.8 H1040.5 V67"/><circle cx="1036.5" cy="74.4" r="7.9"/></g>
<g stroke="#bfccd7" stroke-width="1.6"><path d="M1072.4 57.4 V82.6"/><rect x="1076.5" y="61" width="15" height="6.6"/><rect x="1076.5" y="72" width="10" height="6.9" fill="#dde2e7"/></g>
<g stroke="#bfccd7"><path d="M1128.8 55.3 V84.6" stroke-width="2"/><path d="M1124.6 60.5 V79 H1114.5z" stroke-width="1.1"/><path d="M1133.3 60.5 V78.8 H1143z" stroke-width="2"/></g>
</svg>
<div class="btn" style="left:1166px;width:81px">Import</div>
<div class="btn" style="left:1254px;width:82px">Export</div>
<div class="btn" style="left:1342px;width:82px">Send To</div>
</div>

<div id="panel">
<svg class="abs" style="left:0;top:0" width="270" height="130" viewBox="1160 95 270 130" fill="none" stroke="#0a84c0">
<g stroke-width="1.7"><path d="M1185.6 112.7 L1224.2 110.3 L1224.2 151.4 L1187.3 148.5z"/></g>
<g stroke-width="1.1"><path d="M1192 112.3 L1192.6 149 M1198.3 111.9 L1198.7 149.5 M1204.9 111.5 L1204.7 150 M1211.3 111.1 L1211 150.4 M1217.7 110.7 L1217.6 150.9 M1186.2 119 L1224.2 117.3 M1186.5 125.1 L1224.2 124.2 M1186.7 131.2 L1224.2 131 M1186.9 137.3 L1224.2 137.8 M1187.1 143.3 L1224.2 144.6"/></g>
<g stroke-width="1.7"><path d="M1277.8 113.2 L1287.3 112.9 L1289.2 140 L1318.7 141.6 L1318.3 152.4 L1280.3 149z"/></g>
<g stroke-width="1.2"><path d="M1284 120 h3.3 M1283.5 126.5 h4 M1284.5 133 h3 M1283.5 139.5 h5.5 M1289 141 v5 M1295.5 141.5 v3 M1302.5 142 v4 M1309.5 142 v3"/></g>
<g stroke-width="1.7"><path d="M1377.5 111.7 L1402 111 a3.5 3.5 0 0 1 3.5 3.5 L1404.8 141 a3 3 0 0 1 -3 3 L1394.2 144.2 L1388 152 L1381.9 143.1 L1377.5 142.5 a3 3 0 0 1 -3 -3 L1374 115 a3.3 3.3 0 0 1 3.5 -3.3z"/></g>
<g stroke-width="1.6"><path d="M1382.4 121 h14 M1382.4 126 h14 M1382.4 130.2 h14 M1382.4 134.5 h10"/></g>
</svg>
<div class="abs" style="left:7.5px;top:78.5px;width:261px;height:45.5px;background:#f2f3f5;border:1px solid #dde1e6;border-radius:4px;box-shadow:0 2px 3px rgba(0,0,0,0.08)"></div>
<div class="abs" style="left:19px;top:91px;font-size:15px;color:#2d3e50">Basic Shapes</div>
<svg class="abs" style="left:248px;top:93px" width="12" height="18"><path d="M2 5.5 L6 1 L10 5.5z M2 11.5 L6 16 L10 11.5z" fill="#1a1a1a"/></svg>
<div class="abs" style="left:263.5px;top:131px;width:8px;height:629px;background:#b9b9b9;border-radius:4px"></div>
<svg class="abs" style="left:0;top:0" width="270" height="834" viewBox="1160 95 270 834">
<defs>
<radialGradient id="sh"><stop offset="0" stop-color="#000" stop-opacity="0.13"/><stop offset="0.6" stop-color="#000" stop-opacity="0.05"/><stop offset="1" stop-color="#000" stop-opacity="0"/></radialGradient>
<linearGradient id="orc" x1="0" x2="1"><stop offset="0" stop-color="#b9521a"/><stop offset="0.5" stop-color="#dc6520"/><stop offset="1" stop-color="#e46c24"/></linearGradient>
<radialGradient id="blsp" cx="0.6" cy="0.35" r="0.7"><stop offset="0" stop-color="#0b9ad4"/><stop offset="0.7" stop-color="#0a88c0"/><stop offset="1" stop-color="#0a6a9a"/></radialGradient>
<radialGradient id="pk" cx="0.6" cy="0.3" r="0.8"><stop offset="0" stop-color="#ec1a8c"/><stop offset="1" stop-color="#b8106a"/></radialGradient>
<linearGradient id="gry" x1="0" x2="1"><stop offset="0" stop-color="#a9b0b8"/><stop offset="1" stop-color="#cfd6de"/></linearGradient>
<pattern id="stripe" width="7" height="7" patternUnits="userSpaceOnUse" patternTransform="rotate(45)"><rect width="7" height="7" fill="#c9d1da"/><rect width="3.5" height="7" fill="#aab3bd"/></pattern>
<linearGradient id="wh" x1="0" x2="1"><stop offset="0" stop-color="#bfc2c4"/><stop offset="1" stop-color="#e8eaeb"/></linearGradient>
</defs>
<g fill="url(#sh)">
<ellipse cx="1210" cy="350" rx="30" ry="26"/><ellipse cx="1298" cy="352" rx="30" ry="26"/><ellipse cx="1384" cy="360" rx="28" ry="24"/>
<ellipse cx="1211" cy="455" rx="30" ry="26"/><ellipse cx="1298" cy="455" rx="30" ry="26"/><ellipse cx="1385" cy="455" rx="30" ry="26"/>
<ellipse cx="1211" cy="560" rx="30" ry="26"/><ellipse cx="1298" cy="560" rx="30" ry="26"/><ellipse cx="1385" cy="560" rx="30" ry="26"/>
<ellipse cx="1211" cy="662" rx="30" ry="26"/><ellipse cx="1298" cy="660" rx="30" ry="26"/><ellipse cx="1385" cy="662" rx="30" ry="26"/>
<ellipse cx="1211" cy="765" rx="30" ry="26"/><ellipse cx="1298" cy="765" rx="30" ry="26"/><ellipse cx="1385" cy="765" rx="30" ry="26"/>
<ellipse cx="1211" cy="870" rx="30" ry="26"/><ellipse cx="1298" cy="870" rx="30" ry="26"/><ellipse cx="1385" cy="870" rx="30" ry="26"/>
</g>
<!-- row1 -->
<g stroke="#6f7780" stroke-width="0.9" stroke-linejoin="round">
<polygon points="1184.5,261.8 1224.5,269.1 1223.6,302.4 1186.7,294.5" fill="url(#stripe)"/>
<polygon points="1224.5,269.1 1235.1,249.1 1233.6,282.7 1223.6,302.4" fill="#c3cbd4"/>
<polygon points="1184.5,261.8 1200,244.2 1235.1,249.1 1224.5,269.1" fill="#d4dbe3"/>
<polygon points="1184.5,261.8 1200,244.2 1235.1,249.1 1224.5,269.1" fill="url(#stripe)" opacity="0.45"/>
<path d="M1277.3 255.5 V290 A20.9 9 0 0 0 1319.1 290 V255.5z" fill="url(#stripe)"/>
<ellipse cx="1298.2" cy="255.5" rx="20.9" ry="8.5" fill="#cdd4dc"/>
<ellipse cx="1298.2" cy="255.5" rx="20.9" ry="8.5" fill="url(#stripe)" opacity="0.5"/>
</g>
<g stroke="#7a0d15" stroke-width="0.8" stroke-linejoin="round">
<polygon points="1358.2,261.8 1398.2,267.3 1397.3,302.4 1360,294.5" fill="#ad1620"/>
<polygon points="1398.2,267.3 1409.1,249.6 1408.2,282.7 1397.3,302.4" fill="#c41a28"/>
<polygon points="1358.2,261.8 1373.6,244.2 1409.1,249.6 1398.2,267.3" fill="#d01a29"/>
</g>
<!-- row2 -->
<path d="M1190.4 349.1 L1192.2 383.6 A18.8 9 0 0 0 1229.6 383.6 L1231.5 349.1z" fill="url(#orc)" stroke="#8a3a10" stroke-width="0.8"/>
<ellipse cx="1210.9" cy="349.1" rx="20.5" ry="9.3" fill="#e06a25" stroke="#8a3a10" stroke-width="0.8"/>
<circle cx="1297.8" cy="365.5" r="19.6" fill="url(#blsp)"/>
<path d="M1365.6 364 L1366.5 382 L1371 383 L1372 372 L1373.5 385 L1379 388.5 L1383 384 L1383.5 372 L1390 384 L1398.5 393 L1401 388 L1401.5 356 L1398 354 L1396 370 L1392 367 L1385 357 L1378 353.5 L1373 357.5 L1368 358z" fill="#6c9ec2"/>
<path d="M1367.5 365 C1368 359 1372 357.5 1374.5 362 C1376 355.5 1381 353.5 1384 358 C1387 364 1390 370 1398.5 375 M1391.5 369 C1392 361 1393 353.5 1396 352.5 M1400 354.5 V359" fill="none" stroke="#92c5e6" stroke-width="3.4" stroke-linecap="round"/>
<!-- row3 -->
<g stroke-linejoin="round" stroke="#0f5e25" stroke-width="0.7">
<polygon points="1186,479.6 1201.8,459.1 1216.4,447.6 1204.5,466.4" fill="#1a7f35"/>
<polygon points="1186,479.6 1204.5,466.4 1224.5,487.6" fill="#1d8c3a"/>
<polygon points="1216.4,447.6 1233.6,466.4 1224.5,487.6 1204.5,466.4" fill="#24a847"/>
</g>
<path d="M1297.8 447.3 L1279.1 478 A18.7 11 0 0 0 1316.5 478z" fill="#7a3592" stroke="#5a2070" stroke-width="0.6"/>
<g stroke="#2a6f78" stroke-width="0.7" stroke-linejoin="round">
<path d="M1360 478.2 L1375.5 452.7 C1380 446 1394 444 1404 452 C1408 456 1408 462 1407.3 465.5 L1398.2 487.6z" fill="#4bbfd0"/>
<path d="M1360 478.2 C1363 466 1390 462 1398.2 487.6z" fill="#3a8f9a"/>
</g>
<!-- row4 -->
<g font-family="Liberation Sans" font-weight="bold" font-size="23" transform="translate(1190 574) skewY(13) skewX(-20)">
<text x="-2.4" y="4.5" fill="#8e0d17" textLength="47" lengthAdjust="spacingAndGlyphs">TEXT</text>
<text x="-1.2" y="2.3" fill="#b0131e" textLength="47" lengthAdjust="spacingAndGlyphs">TEXT</text>
<text x="0" y="0" fill="#d8182a" stroke="#8e0d17" stroke-width="0.6" textLength="47" lengthAdjust="spacingAndGlyphs">TEXT</text>
</g>
<g stroke="#132650" stroke-width="0.6" stroke-linejoin="round">
<polygon points="1270.9,557.3 1312.7,563.6 1310,599.1 1273.6,591.8" fill="#1f3a78"/>
<polygon points="1312.7,563.6 1320,577.6 1310,599.1" fill="#213d80"/>
</g>
<g stroke="#7a6010" stroke-width="0.7" stroke-linejoin="round">
<polygon points="1385.5,551.5 1397.3,599.5 1360.5,590.5" fill="#e6bb2b"/>
<polygon points="1385.5,551.5 1407.3,577.6 1397.3,599.5" fill="#f4cc3c"/>
</g>
<!-- row5 -->
<path d="M1191.8 682.7 A19.3 21.5 0 0 1 1230.4 682.7 A19.3 10 0 0 1 1191.8 682.7z" fill="url(#pk)"/>
<g stroke="#14285a" stroke-width="0.6" stroke-linejoin="round">
<polygon points="1280.9,661.8 1302.7,663.6 1302.7,701.8 1282.7,697.3" fill="#213a78"/>
<polygon points="1302.7,663.6 1319.5,658.2 1316.9,692.7 1302.7,701.8" fill="#27468c"/>
<polygon points="1278.2,651.5 1293.6,646 1313.6,648.2 1319.5,658.2 1302.7,663.6 1280.9,661.8" fill="#2a4a92"/>
<polygon points="1278.2,651.5 1280.9,661.8 1282.7,697.3" fill="#1f3670"/>
</g>
<path d="M1366.4 691.8 C1370 675 1376 655 1384.5 655 C1393 655 1399 675 1403.8 691.8 A18.7 8 0 0 1 1366.4 691.8z" fill="url(#wh)" stroke="#666" stroke-width="0.8"/>
<!-- row6 -->
<ellipse cx="1210.9" cy="777.2" rx="19.6" ry="13.5" fill="url(#blsp)" stroke="#086a98" stroke-width="0.6"/>
<ellipse cx="1210.9" cy="777.2" rx="8" ry="2.6" fill="#e8ecef"/>
<path d="M1278.3 772.3 V783.2 A19.5 9 0 0 0 1317.3 783.2 V772.3z" fill="#d25f1c" stroke="#8a3a10" stroke-width="0.6"/>
<ellipse cx="1297.8" cy="772.3" rx="19.5" ry="9" fill="#e36c26" stroke="#8a3a10" stroke-width="0.6"/>
<ellipse cx="1297.8" cy="771.8" rx="8.3" ry="4.2" fill="#c25718" stroke="#8a3a10" stroke-width="0.5"/>
<path d="M1367.5 767 L1368 778 C1370 785 1375 790 1379.5 793 C1395 787 1406 782 1407.3 775 L1407.3 766 C1408 772 1398 778 1379 785 C1372 780 1367.5 774 1367.5 767z" fill="#774828" stroke="#4e2e14" stroke-width="0.7"/>
<path d="M1367.5 767 C1366 759 1376 755 1381 761.5 C1388 755.5 1405 757 1407.3 766 C1408 772 1398 778 1379 785 C1372 780 1367.5 774 1367.5 767z" fill="#8e5b38" stroke="#4e2e14" stroke-width="0.7"/>
<!-- row7 -->
<polygon points="1194,879 1209,877.5 1215,876 1218.5,878 1230.5,886 1218,887.5 1216.5,898 1208,892 1192.5,893 1203,885" fill="#3ab7d0" stroke="#1f6e80" stroke-width="0.7" stroke-linejoin="round"/>
<path d="M1215 876 L1210 893 M1215 876 L1220 888" stroke="#2b8ea3" stroke-width="0.7"/>
<g stroke="#6a5410" stroke-width="0.7" stroke-linejoin="round">
<polygon points="1281,883 1299,889 1304.5,898 1304.5,892 1317,882 1318,878 1287,873" fill="#c69c1c"/>
<polygon points="1281,871 1290,872.5 1303,867 1303,873.5 1317,876.5 1305,881.5 1304.5,891 1296,884 1280,886 1287,879" fill="#e7c132"/>
</g>
<g stroke="#7a0d15" stroke-width="0.6" stroke-linejoin="round">
<polygon points="1370,864 1385.5,862.5 1403,872 1402,894 1381,898 1367,886" fill="#d81b2b"/>
<polygon points="1367,886 1381,898 1385,880 1372,879" fill="#ad1520"/>
<polygon points="1385,880 1403,872 1402,894 1381,898" fill="#c21826"/>
<path d="M1385.5 862.5 L1385 880 L1372 879 L1370 864 M1385 880 L1403 872 M1385 880 L1402 894 M1372 879 L1367 886" fill="none"/>
</g>
</svg>

</div>
<div class="abs" style="left:1150px;top:495px;width:16px;height:46px;background:#f2f3f5;border:1px solid #dde1e6;border-right:none"></div>
<svg class="abs" style="left:1150px;top:495px" width="16" height="46"><path d="M6.3 12 L12.5 23 L6.5 33.8" stroke="#111" stroke-width="1.6" fill="none"/></svg>
</body></html>
